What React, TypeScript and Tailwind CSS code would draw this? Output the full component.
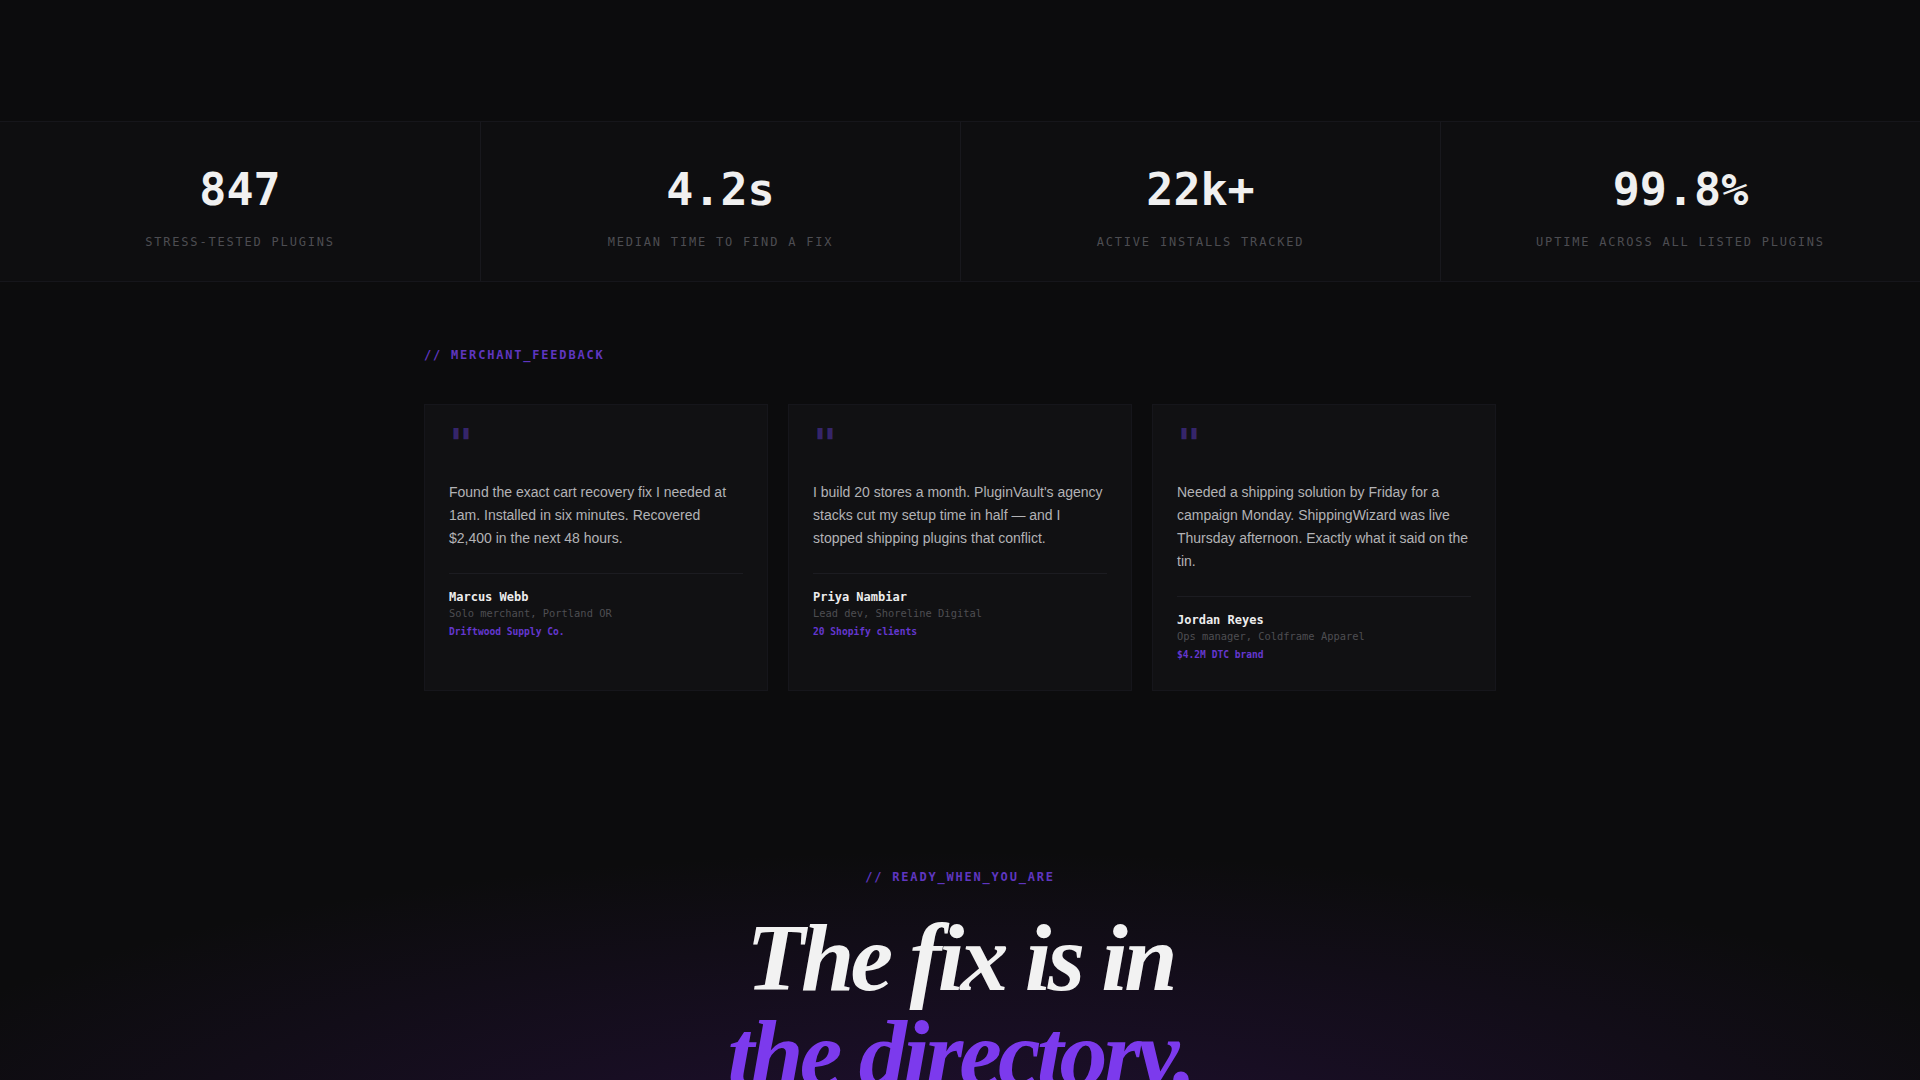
export default function App() {
    const stats = [
        { value: "847", label: "STRESS-TESTED PLUGINS" },
        { value: "4.2s", label: "MEDIAN TIME TO FIND A FIX" },
        { value: "22k+", label: "ACTIVE INSTALLS TRACKED" },
        { value: "99.8%", label: "UPTIME ACROSS ALL LISTED PLUGINS" },
    ];

    const quotes = [
        {
            text: "Found the exact cart recovery fix I needed at 1am. Installed in six minutes. Recovered $2,400 in the next 48 hours.",
            name: "Marcus Webb",
            role: "Solo merchant, Portland OR",
            company: "Driftwood Supply Co.",
        },
        {
            text: "I build 20 stores a month. PluginVault's agency stacks cut my setup time in half — and I stopped shipping plugins that conflict.",
            name: "Priya Nambiar",
            role: "Lead dev, Shoreline Digital",
            company: "20 Shopify clients",
        },
        {
            text: "Needed a shipping solution by Friday for a campaign Monday. ShippingWizard was live Thursday afternoon. Exactly what it said on the tin.",
            name: "Jordan Reyes",
            role: "Ops manager, Coldframe Apparel",
            company: "$4.2M DTC brand",
        },
    ];

    return (
        <div className="min-h-screen bg-[#0c0c0d] font-['DejaVu_Sans_Mono',monospace] overflow-hidden">
            {/* stats band */}
            <section className="pt-[121px]">
                <div className="grid grid-cols-4 border-y border-[#16161b] bg-[#0e0e10]">
                    {stats.map((s, i) => (
                        <div
                            key={s.label}
                            className={`h-[159px] flex flex-col items-center pt-[45px] ${i > 0 ? "border-l border-[#18181d]" : ""}`}
                        >
                            <span className="text-[45px] leading-[46px] font-bold text-[#f0f0f0]">{s.value}</span>
                            <span className="mt-[21px] text-[12px] leading-[16px] tracking-[0.15em] text-[#4d4d52]">{s.label}</span>
                        </div>
                    ))}
                </div>
            </section>

            {/* feedback */}
            <section className="w-[1072px] mx-auto pt-[64px]">
                <div className="text-[12px] leading-[18px] font-bold tracking-[0.15em] text-[#5f36c0]">// MERCHANT_FEEDBACK</div>
                <div className="mt-[40px] grid grid-cols-3 gap-5">
                    {quotes.map((q) => (
                        <div key={q.name} className="bg-[#111113] border border-[#16161b] px-6 pt-6 pb-[28px] flex flex-col">
                            <div className="text-[40px] leading-[30px] font-bold text-[#35256a] h-[40px]">"</div>
                            <p className="mt-3 font-['Liberation_Sans',Arial,sans-serif] text-[14px] leading-[23px] text-[#b3b3b6]">
                                {q.text}
                            </p>
                            <div className="mt-[23px] border-t border-[#1c1c21] pt-[15px] flex flex-col">
                                <span className="text-[12px] leading-[16px] font-bold text-[#ededed]">{q.name}</span>
                                <span className="text-[10.4px] leading-[16px] text-[#4e4e52]">{q.role}</span>
                                <span className="mt-[4px] text-[9.6px] leading-[14px] font-bold text-[#6437cf]">{q.company}</span>
                            </div>
                        </div>
                    ))}
                </div>
            </section>

            {/* cta */}
            <section className="relative pt-[177px] pb-[140px] flex flex-col items-center bg-[radial-gradient(ellipse_75%_70%_at_50%_85%,rgba(70,22,120,0.34),transparent_80%)]">
                <div className="text-[12px] leading-[18px] font-bold tracking-[0.15em] text-[#5f36c0]">// READY_WHEN_YOU_ARE</div>
                <h2 className="mt-[24px] text-center font-['Liberation_Serif',serif] italic font-bold text-[96px] leading-none tracking-[-0.04em]">
                    <span className="block text-[#f2f2f2]">The fix is in</span>
                    <span className="block text-[#7c3aed]">the directory.</span>
                </h2>
            </section>
        </div>
    );
}
